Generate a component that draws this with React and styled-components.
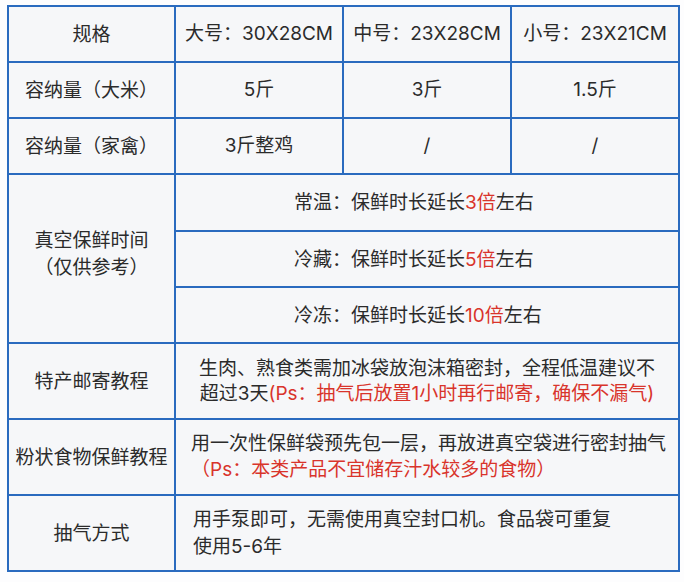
import styled, { createGlobalStyle } from "styled-components";

const GlobalStyle = createGlobalStyle`
  body {
    margin: 0;
    background: #fdfdfe;
    font-family: Inter, "Noto Sans CJK SC", "Noto Sans", sans-serif;
    color: #2b2b2b;
  }
`;

const Table = styled.table`
  margin: 5px 0 0 7px;
  width: 671px;
  table-layout: fixed;
  border-collapse: collapse;
  background: #f6f7f9;
  border: 2px solid #2a6bbf;
  font-size: 19px;
`;

const Row = styled.tr`
  height: ${(p) => p.$h}px;
`;

const Cell = styled.td`
  border: 2px solid #2a6bbf;
  padding: 0;
  text-align: center;
  vertical-align: middle;
  line-height: 28px;
  white-space: nowrap;
`;

const LabelCell = styled(Cell)`
  line-height: 27px;
  padding-bottom: ${(p) => p.$lift || 0}px;
`;

const NoteCell = styled(Cell)`
  text-align: ${(p) => (p.$center ? "center" : "left")};
  padding-left: ${(p) => p.$indent || 0}px;
  line-height: ${(p) => p.$lh || 25}px;
`;

const Red = styled.span`
  color: #d9342b;
`;

const sizes = ["大号：30X28CM", "中号：23X28CM", "小号：23X21CM"];

const storage = [
  { label: "常温", times: "3" },
  { label: "冷藏", times: "5" },
  { label: "冷冻", times: "10" },
];

export default function App() {
  return (
    <>
      <GlobalStyle />
      <Table>
        <colgroup>
          <col style={{ width: 167 }} />
          <col style={{ width: 168 }} />
          <col style={{ width: 168 }} />
          <col style={{ width: 168 }} />
        </colgroup>
        <tbody>
          <Row $h={56}>
            <LabelCell>规格</LabelCell>
            {sizes.map((s) => (
              <Cell key={s}>{s}</Cell>
            ))}
          </Row>
          <Row $h={56}>
            <LabelCell>容纳量（大米）</LabelCell>
            <Cell>5斤</Cell>
            <Cell>3斤</Cell>
            <Cell>1.5斤</Cell>
          </Row>
          <Row $h={56}>
            <LabelCell>容纳量（家禽）</LabelCell>
            <Cell>3斤整鸡</Cell>
            <Cell>/</Cell>
            <Cell>/</Cell>
          </Row>
          {storage.map((s, i) => (
            <Row $h={i === 0 ? 57 : 56} key={s.label}>
              {i === 0 && (
                <LabelCell rowSpan={3} $lift={10}>
                  真空保鲜时间
                  <br />
                  （仅供参考）
                </LabelCell>
              )}
              <NoteCell colSpan={3} $indent={118}>
                {s.label}：保鲜时长延长<Red>{s.times}倍</Red>左右
              </NoteCell>
            </Row>
          ))}
          <Row $h={76}>
            <LabelCell>特产邮寄教程</LabelCell>
            <NoteCell colSpan={3} $center>
              生肉、熟食类需加冰袋放泡沫箱密封，全程低温建议不
              <br />
              超过3天<Red>(Ps：抽气后放置1小时再行邮寄，确保不漏气)</Red>
            </NoteCell>
          </Row>
          <Row $h={76}>
            <LabelCell>粉状食物保鲜教程</LabelCell>
            <NoteCell colSpan={3} $indent={15} $lh={26}>
              用一次性保鲜袋预先包一层，再放进真空袋进行密封抽气
              <br />
              <Red>（Ps：本类产品不宜储存汁水较多的食物）</Red>
            </NoteCell>
          </Row>
          <Row $h={76}>
            <LabelCell>抽气方式</LabelCell>
            <NoteCell colSpan={3} $indent={17} $lh={27}>
              用手泵即可，无需使用真空封口机。食品袋可重复
              <br />
              使用5-6年
            </NoteCell>
          </Row>
        </tbody>
      </Table>
    </>
  );
}
